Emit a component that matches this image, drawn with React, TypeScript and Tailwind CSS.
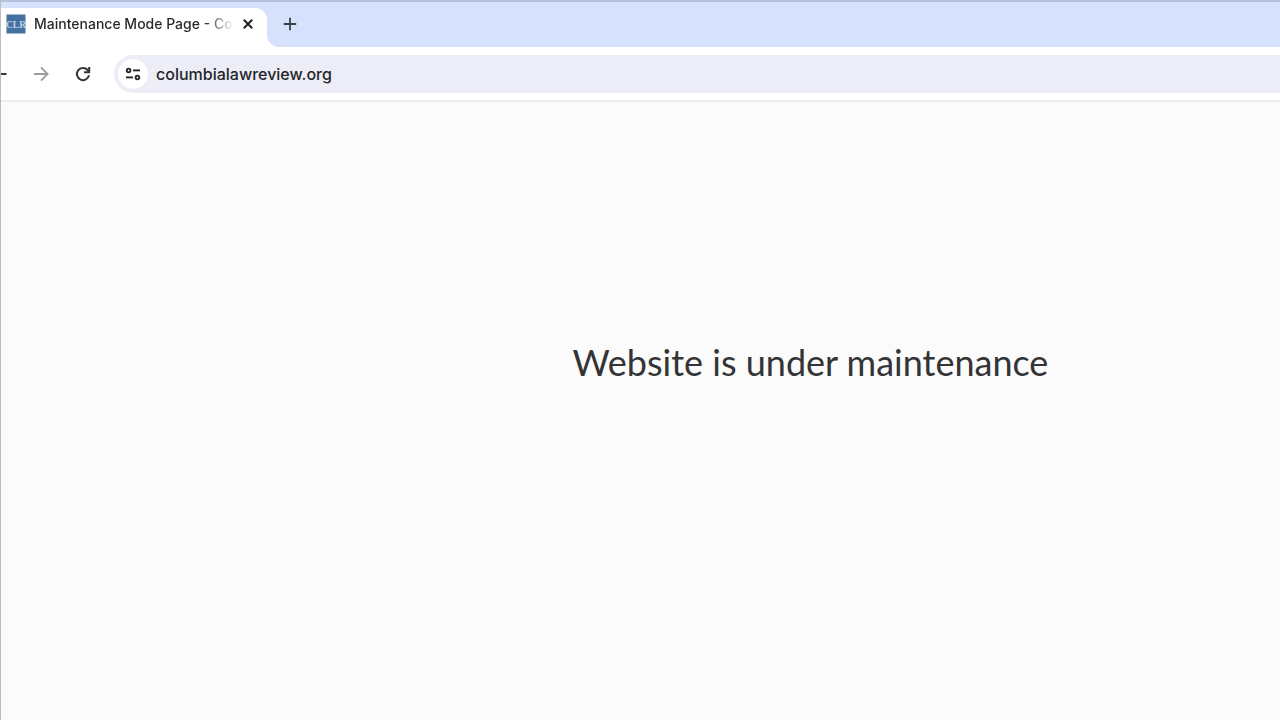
const TabStrip = () => {
  return (
    <div className="flex items-end border-t-2 border-[#b3c3df] bg-[#d6e2fc] pt-1.5">
      <div className="relative flex h-[39px] items-center rounded-tr-xl bg-white pl-[5px] pr-[9px] pb-[7px]">
        <svg className="h-5 w-5 shrink-0" viewBox="0 0 20 20" aria-hidden="true">
          <rect x="0.5" y="0.5" width="19" height="19" fill="#44719f" />
          <text
            x="10"
            y="14.2"
            textAnchor="middle"
            fontSize="9.5"
            fontWeight="bold"
            fontFamily="'Liberation Serif', serif"
            fill="#bcd2e8"
          >
            CLR
          </text>
        </svg>
        <span className="ml-2 w-[200px] whitespace-nowrap bg-linear-to-r from-[#26272a] from-85% to-transparent bg-clip-text font-['Inter',sans-serif] text-sm font-medium text-transparent">
          Maintenance Mode Page - Co
        </span>
        <button type="button" aria-label="Close tab" className="ml-1 flex h-5 w-5 items-center justify-center text-[#1f2022]">
          <svg className="h-5 w-5" viewBox="0 0 20 20" fill="none" stroke="currentColor" strokeWidth="2">
            <path d="m5.8 5.8 8.4 8.4M14.2 5.8l-8.4 8.4" />
          </svg>
        </button>
        <svg className="absolute bottom-0 left-full h-3 w-3 text-white" viewBox="0 0 12 12" aria-hidden="true">
          <path d="M0 0a12 12 0 0 0 12 12H0z" fill="currentColor" />
        </svg>
      </div>
      <button type="button" aria-label="New tab" className="mb-[11px] ml-[11px] flex h-6 w-6 items-center justify-center text-[#3c4046]">
        <svg className="h-5 w-5" viewBox="0 0 20 20" fill="none" stroke="currentColor" strokeWidth="1.8">
          <path d="M10 3.8v12.4M3.8 10h12.4" />
        </svg>
      </button>
    </div>
  );
};

const Toolbar = () => {
  return (
    <div className="flex items-center overflow-hidden border-b-2 border-[#ececec] bg-white pt-2 pb-[7px]">
      <button type="button" aria-label="Back" className="-ml-3 flex h-6 w-5 items-center justify-center text-[#3a3b3e]">
        <svg className="h-5 w-5" viewBox="0 0 20 20" fill="none" stroke="currentColor" strokeWidth="1.8">
          <path d="M17.5 10h-14M10 3.5 3.5 10l6.5 6.5" />
        </svg>
      </button>
      <button type="button" aria-label="Forward" className="ml-5 flex h-6 w-6 items-center justify-center text-[#9c9c9c]">
        <svg className="h-5 w-5" viewBox="0 0 20 20" fill="none" stroke="currentColor" strokeWidth="1.8">
          <path d="M3 10h13M10 3.4l6.6 6.6-6.6 6.6" />
        </svg>
      </button>
      <button type="button" aria-label="Reload" className="ml-[18px] flex h-6 w-6 items-center justify-center text-[#333437]">
        <svg className="h-5 w-5" viewBox="0 0 20 20" fill="none" stroke="currentColor" strokeWidth="2">
          <path d="M16 11.2A6.1 6.1 0 1 1 14.6 6L16.2 7.8" />
          <path d="M16.2 3v5.2H11" />
        </svg>
      </button>
      <div className="ml-[19px] flex h-[38px] flex-1 items-center rounded-l-full bg-[#ecedf6] pl-1">
        <button
          type="button"
          aria-label="View site information"
          className="flex h-[30px] w-[30px] shrink-0 items-center justify-center rounded-full bg-white text-[#26272a]"
        >
          <svg className="h-5 w-5" viewBox="0 0 20 20" fill="none" stroke="currentColor" strokeWidth="1.9">
            <circle cx="5.6" cy="6.4" r="1.8" />
            <path d="M10 6.4h7" />
            <circle cx="14.4" cy="13.4" r="1.8" />
            <path d="M3 13.4h7" />
          </svg>
        </button>
        <input
          type="text"
          aria-label="Address"
          defaultValue="columbialawreview.org"
          className="ml-2 min-w-0 flex-1 bg-transparent font-['Inter',sans-serif] text-base font-medium text-[#242528] outline-none"
        />
      </div>
    </div>
  );
};

export default function App() {
  return (
    <div className="flex min-h-screen flex-col border-l border-[#bdbdbd] bg-[#fbfbfb]">
      <TabStrip />
      <Toolbar />
      <main className="flex flex-1 items-center justify-center pb-[98px] pl-[340px]">
        <h1 className="whitespace-nowrap font-['Lato',sans-serif] text-4xl text-[#333436]">
          Website is under maintenance
        </h1>
      </main>
    </div>
  );
}
